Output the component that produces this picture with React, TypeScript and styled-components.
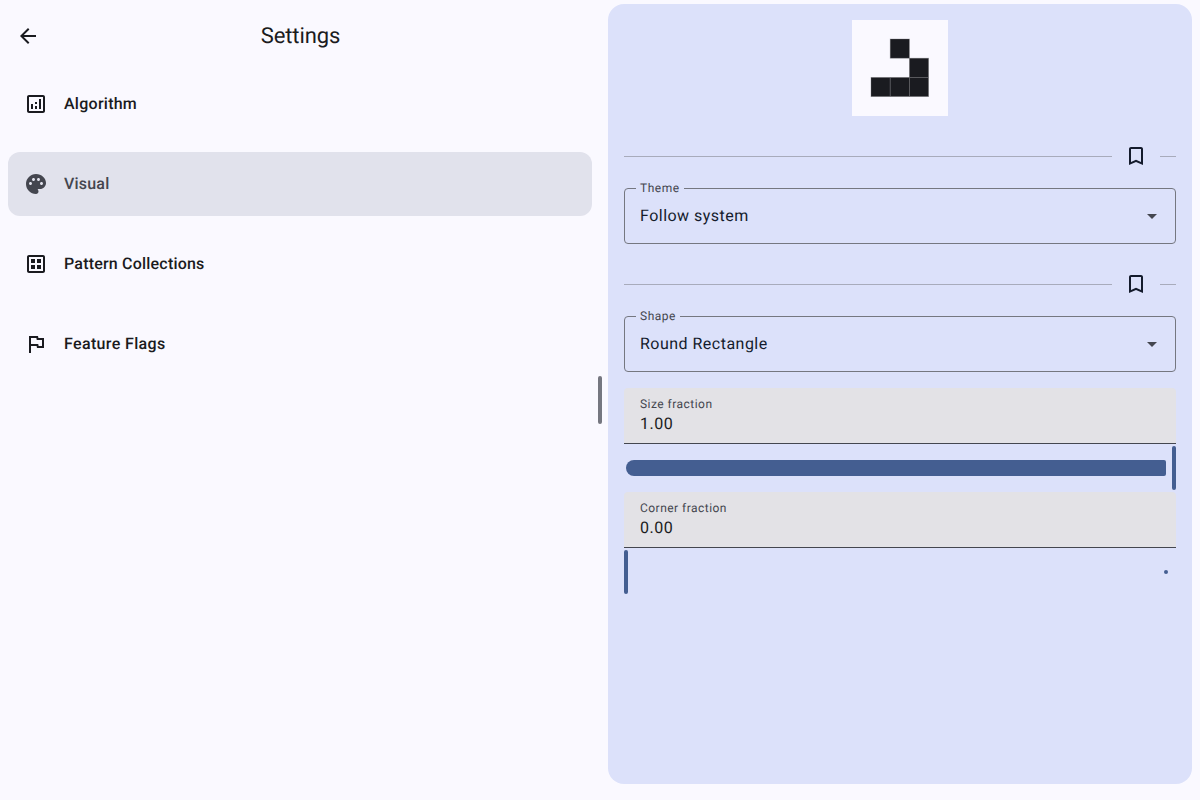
import React from "react";
import styled, { createGlobalStyle } from "styled-components";

const GlobalStyle = createGlobalStyle`
  * { box-sizing: border-box; }
  body {
    margin: 0;
    background: #faf9ff;
    color: #1a1b20;
    font-family: Roboto, "Liberation Sans", sans-serif;
    text-rendering: geometricPrecision;
  }
`;

const Screen = styled.div`
  position: relative;
  display: flex;
  width: 1200px;
  height: 800px;
  overflow: hidden;
  background: #faf9ff;
`;

const ListPane = styled.div`
  flex: 0 0 600px;
  display: flex;
  flex-direction: column;
`;

const AppBar = styled.header`
  display: grid;
  grid-template-columns: 48px 1fr 48px;
  align-items: center;
  height: 72px;
  padding: 0 4px;
`;

const BackButton = styled.button`
  display: flex;
  align-items: center;
  justify-content: center;
  width: 48px;
  height: 48px;
  padding: 0;
  border: 0;
  background: none;
  color: #1a1b20;
`;

const Title = styled.h1`
  margin: 0;
  padding: 2px 0 0 1px;
  font-size: 22px;
  line-height: 28px;
  font-weight: 400;
  letter-spacing: -0.1px;
  text-align: center;
`;

const NavList = styled.nav`
  display: flex;
  flex-direction: column;
  gap: 16px;
  padding: 0 8px;
`;

const NavItem = styled.div<{ $selected?: boolean; $tracking?: number }>`
  display: flex;
  align-items: center;
  gap: 16px;
  height: 64px;
  padding: 0 16px;
  border-radius: 12px;
  font-size: 16px;
  line-height: 24px;
  font-weight: 500;
  letter-spacing: ${(p) => p.$tracking ?? 0.2}px;
  background: ${(p) => (p.$selected ? "#e1e2ec" : "transparent")};
  color: ${(p) => (p.$selected ? "#44464f" : "#1a1b20")};
`;

const DragHandle = styled.div`
  position: absolute;
  left: 598px;
  top: 376px;
  width: 4px;
  height: 48px;
  border-radius: 2px;
  background: #757780;
`;

const DetailPane = styled.main`
  flex: 1;
  display: flex;
  flex-direction: column;
  margin: 4px 8px 16px;
  padding: 16px;
  border-radius: 16px;
  background: #dce1fa;
  color: #141b2c;
`;

const Preview = styled.svg`
  display: block;
  align-self: center;
  flex: none;
  width: 96px;
  height: 96px;
  background: #faf9ff;
`;

const SectionDivider = styled.div`
  display: grid;
  grid-template-columns: 1fr 48px 16px;
  align-items: center;
  height: 48px;
  margin-top: 16px;
`;

const Line = styled.div`
  height: 1px;
  background: #a8abbb;
`;

const BookmarkButton = styled.button`
  display: flex;
  align-items: center;
  justify-content: center;
  height: 48px;
  padding: 0;
  border: 0;
  background: none;
  color: #141b2c;
`;

const SelectField = styled.fieldset`
  display: flex;
  align-items: center;
  justify-content: space-between;
  height: 64px;
  min-width: 0;
  margin: 0;
  padding: 8px 11px 0;
  border: 1px solid #757780;
  border-radius: 4px;
`;

const SelectLegend = styled.legend`
  height: 16px;
  padding: 0 4.5px 0 4px;
  font-size: 12px;
  line-height: 16px;
  letter-spacing: 0.5px;
  color: #44464f;
`;

const SelectValue = styled.span`
  padding-left: 4px;
  font-size: 16px;
  line-height: 24px;
  letter-spacing: 0.48px;
`;

const FilledField = styled.div`
  display: flex;
  flex-direction: column;
  height: 56px;
  padding: 8px 16px;
  border-bottom: 1px solid #44464f;
  border-radius: 4px 4px 0 0;
  background: #e3e2e6;
  color: #1a1b20;
`;

const FilledLabel = styled.span`
  font-size: 12px;
  line-height: 16px;
  letter-spacing: 0.47px;
  color: #44464f;
`;

const FilledValue = styled.span`
  font-size: 16px;
  line-height: 24px;
  letter-spacing: 0.5px;
`;

const Fields = styled.section`
  display: flex;
  flex-direction: column;
  margin-top: 16px;
`;

const Slider = styled.div`
  display: flex;
  align-items: center;
  height: 48px;
`;

const Track = styled.div`
  flex: 1;
  height: 16px;
  margin: 0 6px 0 2px;
  border-radius: 8px 2px 2px 8px;
  background: #445e91;
`;

const EmptyTrack = styled.div`
  flex: 1;
  display: flex;
  justify-content: flex-end;
  padding-right: 8px;
`;

const StopDot = styled.div`
  width: 4px;
  height: 4px;
  border-radius: 50%;
  background: #445e91;
`;

const Thumb = styled.div`
  width: 4px;
  height: 44px;
  border-radius: 2px;
  background: #445e91;
`;

const Glyph = ({ d }: { d: string }) => (
  <svg width="24" height="24" viewBox="0 0 24 24" fill="currentColor">
    <path d={d} fillRule="evenodd" />
  </svg>
);

const icons = {
  back: "M20 11H7.83l5.59-5.59L12 4l-8 8 8 8 1.41-1.41L7.83 13H20v-2z",
  analytics:
    "M19 3H5c-1.1 0-2 .9-2 2v14c0 1.1.9 2 2 2h14c1.1 0 2-.9 2-2V5c0-1.1-.9-2-2-2zm0 16H5V5h14v14zM7 12h2v5H7zM15 7h2v10h-2zM11 14h2v3h-2zM11 10h2v2h-2z",
  palette:
    "M12 2C6.49 2 2 6.49 2 12s4.49 10 10 10c1.38 0 2.5-1.12 2.5-2.5 0-.61-.23-1.2-.64-1.67-.08-.1-.13-.21-.13-.33 0-.28.22-.5.5-.5H16c3.31 0 6-2.69 6-6 0-4.96-4.49-9-10-9zm5.5 11c-.83 0-1.5-.67-1.5-1.5s.67-1.5 1.5-1.5 1.5.67 1.5 1.5-.67 1.5-1.5 1.5zm-3-4c-.83 0-1.5-.67-1.5-1.5S13.67 6 14.5 6s1.5.67 1.5 1.5S15.33 9 14.5 9zM5 11.5c0-.83.67-1.5 1.5-1.5s1.5.67 1.5 1.5S7.33 13 6.5 13 5 12.33 5 11.5zm6-4c0 .83-.67 1.5-1.5 1.5S8 8.33 8 7.5 8.67 6 9.5 6s1.5.67 1.5 1.5z",
  dataset:
    "M19 3H5c-1.1 0-2 .9-2 2v14c0 1.1.9 2 2 2h14c1.1 0 2-.9 2-2V5c0-1.1-.9-2-2-2zm0 16H5V5h14v14zM7 7h4v4H7zM7 13h4v4H7zM13 7h4v4h-4zM13 13h4v4h-4z",
  flag: "M12.36 6l.4 2H18v6h-3.36l-.4-2H7V6h5.36M14 4H5v17h2v-7h5.6l.4 2h7V6h-5.6L14 4z",
  bookmark:
    "M17 3H7c-1.1 0-2 .9-2 2v16l7-3 7 3V5c0-1.1-.9-2-2-2zm0 15l-5-2.18L7 18V5h10v13z",
  dropDown: "M7 10l5 5 5-5z",
};

const navItems = [
  { label: "Algorithm", icon: icons.analytics, tracking: 0.26 },
  { label: "Visual", icon: icons.palette, selected: true },
  { label: "Pattern Collections", icon: icons.dataset },
  { label: "Feature Flags", icon: icons.flag, tracking: 0.36 },
];

const gliderCells = [
  [2, 1],
  [3, 2],
  [1, 3],
  [2, 3],
  [3, 3],
];

const CELL = 19.2;

const Divider = () => (
  <SectionDivider>
    <Line />
    <BookmarkButton aria-label="Bookmark">
      <Glyph d={icons.bookmark} />
    </BookmarkButton>
    <Line />
  </SectionDivider>
);

const DropDown = styled.span`
  display: flex;
  color: #44464f;
`;

const Select = ({ label, value }: { label: string; value: string }) => (
  <SelectField>
    <SelectLegend>{label}</SelectLegend>
    <SelectValue>{value}</SelectValue>
    <DropDown>
      <Glyph d={icons.dropDown} />
    </DropDown>
  </SelectField>
);

const NumberField = ({ label, value }: { label: string; value: string }) => (
  <FilledField>
    <FilledLabel>{label}</FilledLabel>
    <FilledValue>{value}</FilledValue>
  </FilledField>
);

export default function App() {
  return (
    <Screen>
      <GlobalStyle />
      <ListPane>
        <AppBar>
          <BackButton aria-label="Back">
            <Glyph d={icons.back} />
          </BackButton>
          <Title>Settings</Title>
        </AppBar>
        <NavList>
          {navItems.map((item) => (
            <NavItem
              key={item.label}
              $selected={item.selected}
              $tracking={item.tracking}
            >
              <Glyph d={item.icon} />
              {item.label}
            </NavItem>
          ))}
        </NavList>
      </ListPane>
      <DetailPane>
        <Preview viewBox="0 0 96 96">
          {gliderCells.map(([x, y]) => (
            <rect
              key={`${x}-${y}`}
              x={x * CELL - 0.2}
              y={y * CELL - 0.2}
              width={CELL}
              height={CELL}
              fill="#1a1b20"
              stroke="#77777c"
              strokeOpacity="0.45"
              strokeWidth="0.8"
            />
          ))}
        </Preview>
        <Divider />
        <Select label="Theme" value="Follow system" />
        <Divider />
        <Select label="Shape" value="Round Rectangle" />
        <Fields>
          <NumberField label="Size fraction" value="1.00" />
          <Slider>
            <Track />
            <Thumb />
          </Slider>
          <NumberField label="Corner fraction" value="0.00" />
          <Slider>
            <Thumb />
            <EmptyTrack>
              <StopDot />
            </EmptyTrack>
          </Slider>
        </Fields>
      </DetailPane>
      <DragHandle />
    </Screen>
  );
}
